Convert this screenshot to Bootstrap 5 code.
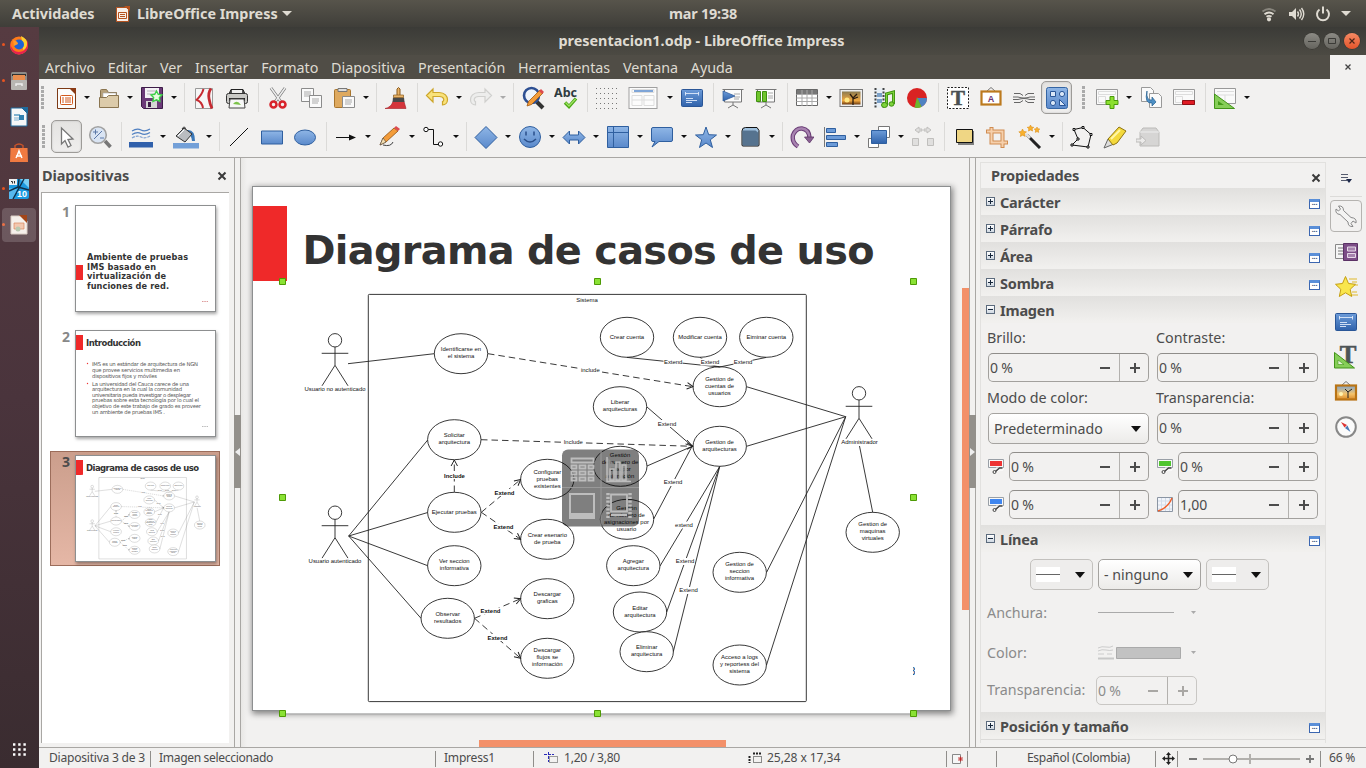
<!DOCTYPE html>
<html lang="es">
<head>
<meta charset="utf-8">
<title>presentacion1.odp - LibreOffice Impress</title>
<meta name="viewport" content="width=device-width, initial-scale=1">
<link href="https://cdn.jsdelivr.net/npm/bootstrap@5.3.0/dist/css/bootstrap.min.css" rel="stylesheet">
<style>
body{width:1366px;height:768px;overflow:hidden;background:#f2f1f0;color:#4c4c4c;font-family:"Noto Sans","Open Sans",sans-serif;font-size:14px;line-height:1.2}
svg{display:block;flex:none}
.topbar{height:27px;background:linear-gradient(#57544b,#3f3e39);color:#dfdbd2;font-weight:700;font-size:14.4px;flex:none}
.topbar .fit-a{letter-spacing:-.05px;width:83px}
.topbar .clock{left:669px;top:5px;letter-spacing:-.2px}
.dock{width:39px;background:linear-gradient(#563b41,#4a343c 50%,#3a2c30);flex:none}
.dock-item{height:36px;position:relative}
.dock-item.run::before{content:"";position:absolute;left:2px;top:16px;width:3px;height:3px;border-radius:2px;background:#e95420}
.dock-item.active::after{content:"";position:absolute;left:2px;top:1px;width:34px;height:34px;border-radius:4px;background:rgba(255,255,255,.17);z-index:0}
.dock-item svg{position:relative;z-index:1;margin-right:1px}
.titlebar{height:28px;background:linear-gradient(#3b3b37,#4c4a43);color:#dfdbd2;font-weight:700;font-size:14.4px;padding-right:6px}
.titlebar .caption{padding-left:60px}
.wbtn{width:16px;height:16px;border-radius:50%;background:linear-gradient(#8c8b85,#65645e);box-shadow:0 0 0 .5px #33322e}
.wbtn.closebtn{background:linear-gradient(#f58a64,#e4542a)}
.menubar{height:24px;background:#504d46;color:#dfdbd2;font-size:14.3px;padding-left:6px;gap:12.7px}
.menubar>span{padding-top:2px}
.menubar .docclose{width:36px;height:24px;background:#f2f1f0;padding-top:0}
.toolbars{height:79px;border-bottom:1px solid #a9a7a4}
.tbar{height:39px;padding-left:1px;padding-bottom:2px}
.tbar.draw{padding-left:2px}
.grip{width:9px;height:24px}
.grip::before{content:"";display:block;width:3px;height:24px;margin-left:1px;background:repeating-linear-gradient(#aaa 0 3px,transparent 3px 4px)}
.tb{width:33px;height:33px;display:flex;align-items:center;justify-content:center;flex:none}
.tb.wide{width:41px;padding-right:1px}
.tb.fill{width:35px}
.tb.on{position:relative}
.tb.on::before{content:"";position:absolute;inset:0 1px 0 1px;border:1px solid #9d9b98;border-radius:5px;background:linear-gradient(#e4e3e1,#efeeed);box-shadow:inset 0 0 2px #bbb}
.tb.on svg{position:relative}
.ar{width:11px;flex:none;display:flex;justify-content:center}
.ar.tight{width:10px}
.ar::before{content:"";border:3px solid transparent;border-top:3.5px solid #111;border-bottom:0}
.ar.off::before{border-top-color:#aaa}
.sp{width:8px;flex:none;height:29px}
.sp::before{content:"";display:block;width:1px;height:29px;margin-left:5px;background:#dbdad8}
.slidepane{width:195px;padding:2px 0 0 2px}
.panehead{font-weight:700;font-size:14.5px;letter-spacing:-.1px;height:32px;padding-right:7px;padding-left:1px}
.thumblist{width:188px;height:551px;background:#fff;border:1px solid #a9a7a4;border-width:1px 0 0 1px;padding:6px 0 0 8px}
.thumb{width:170px;height:115px;padding:5px 0 0 11px;margin-bottom:10px;font-weight:700;font-size:14px;color:#888;line-height:14px;border:1px solid transparent}
.thumb .num{width:13px}
.thumb.sel{background:linear-gradient(#cb9e8c,#e5b7a6);border-color:#9c6d5b;color:#4c4c4c;margin-top:12px;padding-top:3px}
.thumb svg{background:#fff;border:1px solid #8d8f90;box-shadow:1px 2px 3px rgba(0,0,0,.35)}
.splitter{width:7px;border:1px solid #a9a7a4;border-top:0;border-bottom:0;background:#f2f1f0;padding-top:257px}
.split-knob{width:7px;height:73px;background:#93908b;margin-left:-1px;display:flex;align-items:center;justify-content:center}
.canvasarea{width:728px;padding:28px 0 0 11px;background:linear-gradient(90deg,#e8e7e5,#f2f1f0 6px);flex:none}
.slide{width:699px;height:525px;background:#fff;border:1px solid #8d8f90;box-shadow:1px 2px 6px 1px rgba(0,0,0,.45)}
.vbar{width:7px;padding-top:102px}
.vthumb{height:322px;background:#f39069;width:7px}
.hthumb{height:7px;width:247px;background:#f39069;margin:29px 0 0 227px}
.deck{width:346px;margin:4px 0 0 4px;border:1px solid #e2e1df;border-bottom:0;height:581px;flex:none}
.deck .deckhead{height:25px;font-weight:700;font-size:14.6px;letter-spacing:-.15px;padding:0 4px 0 10px}
.deckhead svg{margin-top:5px}
.sect{height:27px;background:linear-gradient(#e1e0de,#f1f0ee 95%);font-weight:700;font-size:14.5px;letter-spacing:-.2px;padding:3px 5px 0 5px}
.sect .pm{width:9px;height:9px;border:1px solid #5b6a7c;background:linear-gradient(#fff,#cfd8e2);margin:-4px 5px 0 0;position:relative}
.pm::before{content:"";position:absolute;left:1px;right:1px;top:3px;height:1px;background:#16263a}
.pm.plus::after{content:"";position:absolute;top:1px;bottom:1px;left:3px;width:1px;background:#16263a}
.more{width:11px;height:10px;border:1px solid #3b66b0;border-top:3px solid #5a8fd8;background:#fff;margin-top:1px;font-size:7px;line-height:1px;color:#203a70;text-align:center}
.two{display:grid;grid-template-columns:161px 161px;grid-template-rows:30px 30px 30px 31px 38px 37px;column-gap:8px;padding-left:7px}
.two>.lbl{display:flex;align-items:center;margin-left:-1px}
.lbl{font-size:14.3px;padding-bottom:1px}
.chan{display:flex;align-items:center;padding-top:7px}
.spin{height:29px;border:1px solid #a2a09d;border-top-color:#8f8d8a;border-radius:5px;display:flex;align-items:stretch;background:#f2f1f0;line-height:27px;font-size:14px;letter-spacing:-.2px}
.spin .val{flex:1;padding-left:1px}
.spin i{width:29px;position:relative;flex:none}
.spin i+i{border-left:1px solid #b3b1ae;width:29px}
.spin i::before{content:"";position:absolute;left:10px;top:13px;width:10px;height:2px;background:#4c4c4c}
.spin i+i::after{content:"";position:absolute;left:14px;top:9px;width:2px;height:10px;background:#4c4c4c}
.spin.off{color:#8d8d8d;border-color:#c9c7c4}
.spin.off i::before,.spin.off i::after{background:#a9a7a4!important}
.combo{height:31px;border:1px solid #a5a3a0;border-radius:5px;background:linear-gradient(#fff,#ecebe9);display:flex;align-items:center;justify-content:space-between;padding:0 7px 0 5px;font-size:14.2px}
.combo .caret{border:5px solid transparent;border-width:6px 5px 0;border-top-color:#111}
.combo.flat{background:#eeedec;border-color:#c3c1be}
.swatch{width:24px;height:15px;background:linear-gradient(#fff 7px,#666 7px 8px,#fff 8px)}
.lin{margin-top:6px}
.linrow{gap:5px;padding:7px 0 0 49px}
.w63{width:63px;padding-left:5px}.w103{width:103px;padding-left:5px}
.prop{padding-left:6px;color:#8b8b8b}.prop .lbl{width:111px}
.anch{height:47px}.colr{height:32px}.trns{height:40px;padding-top:3px;margin-bottom:3px}
.prop.trns .lbl{width:109px}.trns .spin{width:101px}
.ch-r{color:#e33}.ch-g{color:#4fc52f}.ch-b{color:#3f86f0}
.deckend{border-top:1px solid #dcdbd9;height:2px}
.tabs{width:40px;padding-top:2px}
.tabs .tabi{height:35px;display:flex;align-items:center;justify-content:center;width:32px;margin-left:4px}
.tabs .tabi.first{height:37px;border-bottom:1px solid #dcdbd9}
.tabs .tabi.on{border:1px solid #b5b3b0;border-radius:4px;height:32px;margin-top:3px;margin-bottom:2px}
.status{height:21px;border-top:1px solid #a9a7a4;font-size:12.1px;letter-spacing:-.25px;flex:none;padding-top:1px}
.status>div{height:16px;display:flex;align-items:center;border-right:1px solid #908e8b;flex:none}
.status>div.nb{border-right:0}
.s1{width:112px;padding-left:10px}.s2{width:285px;padding-left:8px;letter-spacing:-.35px}.s3{width:98px;padding-left:8px}
.s4{width:204px;padding-left:10px;gap:5px}.s5{width:209px;padding-left:10px;gap:5px;letter-spacing:-.1px}.s6{width:21px}.s7{width:29px}.s8{width:159px;padding-left:30px;letter-spacing:-.35px}.s9{width:22px}.s10{width:143px;padding-left:10px}.s11{padding-left:8px}
.dg text{font-family:"Liberation Sans",Arial,sans-serif;font-size:5.95px;text-anchor:middle;fill:#111}
.dg .bld{font-weight:700}
</style>
</head>
<body class="d-flex flex-column">
<svg width="0" height="0" class="position-absolute">
<defs>
<linearGradient id="gb" x1="0" y1="0" x2="0" y2="1"><stop offset="0" stop-color="#8fb6e6"/><stop offset="1" stop-color="#5a89cb"/></linearGradient>
<linearGradient id="gd" x1="0" y1="0" x2="0" y2="1"><stop offset="0" stop-color="#6d9cd9"/><stop offset="1" stop-color="#2f62ab"/></linearGradient>
<linearGradient id="gsun" x1="0" y1="0" x2="0" y2="1"><stop offset="0" stop-color="#8b7a50"/><stop offset=".7" stop-color="#f0a840"/><stop offset="1" stop-color="#6b3a10"/></linearGradient>
<linearGradient id="gday" x1="0" y1="0" x2="0" y2="1"><stop offset="0" stop-color="#7fa5cf"/><stop offset=".6" stop-color="#f6c46a"/><stop offset="1" stop-color="#d98a2a"/></linearGradient>
<clipPath id="numclip"><rect x="913" y="664" width="2" height="14"/></clipPath>
<marker id="arr" viewBox="0 0 8 8" refX="7" refY="4" markerWidth="8" markerHeight="8" orient="auto" markerUnits="userSpaceOnUse"><path d="M1 .8 7 4 1 7.2" fill="none" stroke="#222"/></marker>
<symbol id="i-new" viewBox="0 0 24 24"><path d="M3.500 2.500H17.500L21.500 6.500V22.500H3.500Z" fill="#fcfcfb" stroke="#7d3a15"/><path d="M15 2H22V9Z" fill="#8a3a14"/><rect x="6.500" y="9.500" width="12" height="9" rx="1" fill="#fff" stroke="#d2591c"/><path d="M8 12h2m1 0h6M8 14h2m1 0h6M8 16h2m1 0h6" stroke="#d2591c"/></symbol>
<symbol id="i-open" viewBox="0 0 24 24"><path d="M3.500 20V4.500q0-1 1-1h5l2 3h8V20z" fill="#b7a17b" stroke="#8a7550"/><path d="M6 7h13v5H6z" fill="#fff" stroke="#aaa" stroke-width=".6"/><path d="M2.500 21.500V11.500h7l2-2h10v12z" fill="#dccbaa" stroke="#8a7550"/></symbol>
<symbol id="i-save" viewBox="0 0 24 24"><path d="M1.500 1.500h21v21h-19l-2-2z" fill="#6b3a78" stroke="#3d1c48"/><path d="M5 2h14v10H5z" fill="#f4f2f5"/><path d="M7 5h10M7 8h9" stroke="#b9b4bc"/><path d="M6 15h11v7H6z" fill="#d5d5d5"/><path d="M8 16h3v5H8z" fill="#3d1c48"/><path d="m16.500 5 1.800 3.300 3.700.6-2.600 2.700.5 3.800-3.400-1.600-3.500 1.600.6-3.800L11 8.900l3.700-.6z" fill="#e9fbe1" stroke="#3fd04a" stroke-width="1.400"/></symbol>
<symbol id="i-pdf" viewBox="0 0 24 24"><path d="M3.500 2.500h17v20h-17z" fill="#f6f6f6" stroke="#999"/><path d="M4 14.500Q10 9 11.500 3M5 14q5 2 6 8" fill="none" stroke="#c62a31" stroke-width="2"/><path d="M19 2.500q-3 4-2 10t3 10" fill="none" stroke="#c62a31" stroke-width="2.800"/></symbol>
<symbol id="i-print" viewBox="0 0 24 24"><path d="M4 8 6 3.500h12L20 8z" fill="#555" stroke="#222"/><path d="M7 4h10v4H7z" fill="#eee"/><rect x="1.500" y="7.500" width="21" height="10" rx="2" fill="#c9c9c6" stroke="#333"/><path d="M4 12h16v3H4z" fill="#222"/><path d="M5 13h14l1 9H4z" fill="#f7f7f7" stroke="#444"/><path d="M8 18q4-5 8 1z" fill="#7cc34a"/></symbol>
<symbol id="i-cut" viewBox="0 0 24 24"><path d="M5 2 15 16M19 2 9 16" stroke="#777" stroke-width="3"/><path d="M5 2 15 16M19 2 9 16" stroke="#eee" stroke-width="1.500"/><circle cx="7.500" cy="18.500" r="3" fill="none" stroke="#d8232b" stroke-width="2.500"/><circle cx="16.500" cy="18.500" r="3" fill="none" stroke="#d8232b" stroke-width="2.500"/></symbol>
<symbol id="i-copy" viewBox="0 0 24 24"><path d="M2.500 2.500h12v13h-12z" fill="#fafafa" stroke="#8b8b8b"/><path d="M5 6h7M5 8h7M5 10h6" stroke="#aaa"/><path d="M10.500 9.500h12v12h-12z" fill="#fafafa" stroke="#8b8b8b"/><path d="M13 13h7M13 15h7M13 17h6" stroke="#aaa"/></symbol>
<symbol id="i-paste" viewBox="0 0 24 24"><rect x="2.500" y="3.500" width="16" height="18" rx="1" fill="#dea95f" stroke="#a8752d"/><path d="M6 2.500h9v3H6z" fill="#ddd" stroke="#777"/><path d="M10.500 10.500h12v11h-12z" fill="#fafafa" stroke="#8b8b8b"/><path d="M13 14h7M13 16h7M13 18h6" stroke="#aaa"/></symbol>
<symbol id="i-brush" viewBox="0 0 24 24"><path d="M1 22.500q6-1 8-7h11l2 7z" fill="#d4353b" stroke="#a31d24" stroke-width=".6"/><path d="M9 11.500h11l.5 4.500H8.500z" fill="#484848"/><path d="M13 10V3q1.500-3 3 0v7z" fill="#e9b469" stroke="#8c5b1d"/><path d="M9.500 9h10v2.500h-10z" fill="#e9b469" stroke="#8c5b1d" stroke-width=".7"/></symbol>
<symbol id="i-undo" viewBox="0 0 24 24"><path d="M1.500 9.500 8 3v3.500h6c6 0 8.500 4 8.500 7s-2 5.500-5 5.500v-3.500c2-.5 2-5-3-5H8V16z" fill="#f9e27a" stroke="#cda62a" stroke-width="1.200"/></symbol>
<symbol id="i-redo" viewBox="0 0 24 24"><path d="M22.500 9.500 16 3v3.500h-6c-6 0-8.500 4-8.500 7S3.500 19 6.500 19v-3.500c-2-.5-2-5 3-5H16V16z" fill="#ededec" stroke="#d0d0ce" stroke-width="1.200"/></symbol>
<symbol id="i-find" viewBox="0 0 24 24"><path d="m15 15 7 7" stroke="#333" stroke-width="4"/><circle cx="10.500" cy="9.500" r="7.500" fill="#eef3fa" stroke="#2d4f92" stroke-width="2.600"/><path d="m6 20 1.500-4.500L19 4l3 3L10.500 18.500z" fill="#f39c3a" stroke="#a25b12" stroke-width=".8"/><path d="m18 5 2-2 3 3-2 2z" fill="#dd4a4f"/></symbol>
<symbol id="i-abc" viewBox="0 0 24 24"><text x="0" y="11" font-family="Noto Sans" font-weight="700" font-size="12" textLength="23" lengthAdjust="spacingAndGlyphs" fill="#2f3b40">Abc</text><path d="m11 16.500 4 4 7-8" fill="none" stroke="#4aa814" stroke-width="3.400"/><path d="m11.500 16.500 3.500 3.500 6.500-7" fill="none" stroke="#a0e264" stroke-width="1.300"/></symbol>
<symbol id="i-grid" viewBox="0 0 24 24"><path d="M1 2.500h23M1 7.500h23M1 12.500h23M1 17.500h23M1 22.500h23" stroke="#777" stroke-dasharray="1 3"/></symbol>
<symbol id="i-lay" viewBox="0 0 30 24"><rect x="1" y="1.500" width="28" height="21" fill="#fcfcfc" stroke="#a0a0a0"/><path d="M4 3.500h22v3H4zM4 9.500h10v10H4zM16 9.500h10v10H16zM4 14h22" fill="none" stroke="#ddd"/><path d="M6 5h19" stroke="#5f8fcd" stroke-width="1.600"/></symbol>
<symbol id="i-master" viewBox="0 0 24 24"><rect x="1.500" y="3.500" width="21" height="17" rx="1" fill="url(#gd)" stroke="#2a5697"/><path d="M5 7.500h14M5.500 6v3.500M18.500 6v3.500M6 12.500h7M6 14.500h11M6 16.500h6" stroke="#dfeafa" stroke-width=".9"/></symbol>
<symbol id="i-show" viewBox="0 0 24 24"><path d="M1.500 3.500h21M3.500 4v12h17V4M12 16v3m0 0-5 3m5-3 5 3" fill="#fcfcfc" stroke="#777"/><path d="M13 8h6M13 11h6M13 13h5" stroke="#aaa"/><path d="m2 5 12 5L2 15z" fill="url(#gd)" stroke="#2a5697" stroke-width=".7"/></symbol>
<symbol id="i-show2" viewBox="0 0 24 24"><path d="M1.500 3.500h21M3.500 4v12h17V4M12 16v3m0 0-5 3m5-3 5 3" fill="#fcfcfc" stroke="#777"/><path d="M14 7h5M14 10h5M14 12h5" stroke="#aaa"/><path d="M2.500 5.500h4v10h-4zM8.500 5.500h4v10h-4z" fill="#6fc52c" stroke="#3f8f10"/></symbol>
<symbol id="i-table" viewBox="0 0 24 24"><path d="M1.500 3.500h21v16h-21z" fill="#fff" stroke="#666"/><path d="M2 4h20v4H2z" fill="#777"/><path d="M1.500 8.500h21M1.500 12h21M1.500 15.500h21M7 4v16M12 4v16M17 4v16" stroke="#aaa"/></symbol>
<symbol id="i-pic" viewBox="0 0 24 24"><rect x="1" y="3.500" width="22.500" height="17" fill="#eee" stroke="#777"/><rect x="3" y="5.500" width="18.500" height="13" fill="url(#gsun)"/><circle cx="8" cy="14" r="2.500" fill="#ffe680"/><path d="M14 19v-7l-3-4m3 4 4-4m-4 5 5-2" stroke="#2b1c10" fill="none" stroke-width="1.300"/></symbol>
<symbol id="i-film" viewBox="0 0 24 24"><path d="M2 2.500h11v19H2z" fill="#e7eef5"/><path d="M3.500 2v20M11.500 2v20" stroke="#444" stroke-width="2" stroke-dasharray="2 1.500"/><path d="M5 7h5v4H5zm0 6h5v4H5z" fill="#7aa0c8"/><path d="M14.500 19V8l7-2v12" fill="none" stroke="#3d9110" stroke-width="3"/><path d="M14.500 19V8l7-2v12" fill="none" stroke="#7ed33c" stroke-width="1.200"/><ellipse cx="12.500" cy="19" rx="3" ry="2.500" fill="#7ed33c" stroke="#3d9110"/><ellipse cx="19.500" cy="18" rx="2.500" ry="2.200" fill="#7ed33c" stroke="#3d9110"/></symbol>
<symbol id="i-pie" viewBox="0 0 24 24"><circle cx="12" cy="12" r="10" fill="#d92323"/><path d="M12 12h10a10 10 0 0 1-5.500 9z" fill="#4f82c2"/><path d="m12 11 4.500 10a10 10 0 0 1-7 .5z" fill="#6ab82e"/></symbol>
<symbol id="i-text" viewBox="0 0 24 24"><rect x="1.500" y="1.500" width="21" height="21" fill="#fff" stroke="#222" stroke-dasharray="2 1.500"/><text x="12" y="19" text-anchor="middle" font-family="Liberation Serif" font-weight="700" font-size="21" fill="#4a5052" stroke="#4a5052" stroke-width=".5">T</text></symbol>
<symbol id="i-frame" viewBox="0 0 24 24"><path d="m8 5 4-3.500L16 5" fill="none" stroke="#777"/><rect x="2.500" y="5.500" width="19" height="13" fill="#fff" stroke="#bc7a1e" stroke-width="2.200"/><text x="12" y="15.500" text-anchor="middle" font-family="Liberation Sans" font-weight="700" font-size="9" fill="#6a3576">A</text></symbol>
<symbol id="i-link" viewBox="0 0 24 24"><path d="M2 7.500h6l3 2m11-2h-6l-3 2M2 16.500h6l3-2m11 2h-6l-3-2M1 11h5q3 1 6 1t6-1h5M1 13.500h5q3-1 6-1t6 1h5" fill="none" stroke="#666"/></symbol>
<symbol id="i-shapes" viewBox="0 0 24 24"><rect x="1.500" y="1.500" width="21" height="21" rx="2" fill="url(#gb)" stroke="#3465a4"/><g fill="#dbe8f8" stroke="#2a5697"><path d="M5.500 5.500h5v5h-5z"/><circle cx="17" cy="8" r="2.600"/><circle cx="8" cy="17" r="2.600"/><path d="M14.500 13.500v6h6z"/></g></symbol>
<symbol id="i-add" viewBox="0 0 24 24"><path d="M1.500 3.500h21v15h-21z" fill="#fafafa" stroke="#999"/><path d="M3.500 5.500h17v3h-17zM3.500 10.500h7v6h-7z" fill="none" stroke="#ddd"/><path d="M15 10.500h4v4h4v4h-4v4h-4v-4h-4v-4h4z" fill="#8be02e" stroke="#4a9a0c"/></symbol>
<symbol id="i-dup" viewBox="0 0 24 24"><path d="M2.500 1.500h9l3 3v11h-12z" fill="#fafafa" stroke="#999"/><path d="M10.500 7.500h9l3 3v11h-12z" fill="#fafafa" stroke="#999"/><path d="M8 5q-1 10 5 9v-3l4 5-4 4v-3Q5 18 8 5z" fill="#4d8fc4" stroke="#25608f" stroke-width=".7"/></symbol>
<symbol id="i-del" viewBox="0 0 24 24"><path d="M1.500 3.500h21v15h-21z" fill="#fafafa" stroke="#999"/><path d="M3.500 5.500h17v3h-17zM3.500 10.500h7v6h-7z" fill="none" stroke="#ddd"/><path d="M10.500 14.500h12v4h-12z" fill="#e01b24" stroke="#8f0f14"/></symbol>
<symbol id="i-design" viewBox="0 0 24 24"><path d="M1.500 2.500h21v15h-21z" fill="#fafafa" stroke="#999"/><path d="M4 5.500h17M4 9h17M12 9v8" stroke="#ddd"/><path d="M1.500 8v14.500h20z" fill="#86ce58" stroke="#419318"/><path d="M5 15v4h6z" fill="#449a18"/></symbol>
<symbol id="i-cursor" viewBox="0 0 24 24"><path d="M6.500 3v16l3.500-3.500 3 6.500 3-1.500-3-6 5-.5z" fill="#fff" stroke="#777" stroke-width="1.300"/></symbol>
<symbol id="i-zoom" viewBox="0 0 24 24"><path d="m17 16 5.500 6" stroke="#777" stroke-width="3.600"/><circle cx="10" cy="10" r="8.300" fill="#d9e4f3" stroke="#a2a2a2" stroke-width="1.600"/><path d="m6 14 8-8M5 7h5M7.500 4.500v5M12 13h4" stroke="#5b78a8"/></symbol>
<symbol id="i-lcol" viewBox="0 0 24 24"><path d="M3 6q5-3 9-1t9-1M3 9.500q5-3 9-1t9-1" fill="none" stroke="#4f7fc0" stroke-width="1.200"/><path d="M3 13q5-3 9-1t9-1" fill="none" stroke="#7fa0cf" stroke-width="1.200" stroke-dasharray="3 1"/><path d="M0 17h24v5.500H0z" fill="#3060ab"/></symbol>
<symbol id="i-fcol" viewBox="0 0 26 24"><path d="M9 4q3-5 4 2" fill="none" stroke="#333"/><path d="M14 5q8-1 8 11h-3q0-6-7-9z" fill="#3b78b8"/><path d="m3 11 8-8 8 6-7 8z" fill="#b9bcc0" stroke="#333"/><path d="m5 11 6-6" stroke="#fff"/><path d="M0 18h26v5.500H0z" fill="#73a0d8"/></symbol>
<symbol id="i-line" viewBox="0 0 24 24"><path d="M3 21 21 3" stroke="#111"/></symbol>
<symbol id="i-rect" viewBox="0 0 24 24"><path d="M1.500 6h21v13h-21z" fill="url(#gb)" stroke="#2f5f9f"/></symbol>
<symbol id="i-ell" viewBox="0 0 24 24"><ellipse cx="12" cy="12.500" rx="10.500" ry="7.500" fill="url(#gb)" stroke="#2f5f9f"/></symbol>
<symbol id="i-arrow" viewBox="0 0 24 24"><path d="M2 12.500h14" stroke="#111"/><path d="m15 9.500 7 3-7 3z" fill="#111"/></symbol>
<symbol id="i-pencil" viewBox="0 0 24 24"><path d="m2 20 3-7L16 3l4 3L8 17z" fill="#f39c3a" stroke="#8f5010" stroke-width=".8"/><path d="m16 3 2-2 4 3-2 2z" fill="#dd4a4f"/><path d="m2 20 3-7 3 4z" fill="#f5dfb0" stroke="#444" stroke-width=".6"/><path d="M5 20q8 2 10-3" stroke="#444" fill="none"/></symbol>
<symbol id="i-conn" viewBox="0 0 24 24"><path d="M5 4.500h6.500v15H17" fill="none" stroke="#111"/><circle cx="4" cy="4.500" r="2.200" fill="#fff" stroke="#111"/><circle cx="18.500" cy="19" r="2.200" fill="#fff" stroke="#111"/></symbol>
<symbol id="i-dia" viewBox="0 0 24 24"><path d="M12 1.500 23 12.500 12 23.500 1 12.500z" fill="url(#gb)" stroke="#2f5f9f"/></symbol>
<symbol id="i-smile" viewBox="0 0 24 24"><circle cx="12" cy="12" r="10.500" fill="url(#gb)" stroke="#2f5f9f"/><path d="M8 6.500v4M16 6.500v4M6 14q6 6 12 0" fill="none" stroke="#2a4f8a" stroke-width="1.500"/></symbol>
<symbol id="i-dbl" viewBox="0 0 24 24"><path d="m1 12.500 6.500-6.500v4h9v-4l6.500 6.500-6.500 6.500v-4h-9v4z" fill="url(#gb)" stroke="#2f5f9f"/></symbol>
<symbol id="i-flow" viewBox="0 0 24 24"><path d="M1.500 1.500h21v21h-21z" fill="url(#gb)" stroke="#2f5f9f"/><path d="M1.500 7.500h21M7.500 1.500v21" stroke="#2f5f9f"/></symbol>
<symbol id="i-call" viewBox="0 0 24 24"><path d="M3 2.500h18q1.500 0 1.500 1.500v11q0 1.500-1.500 1.500H9l-7 5.500 3-5.500H3q-1.500 0-1.500-1.500V4q0-1.500 1.500-1.500z" fill="url(#gb)" stroke="#2f5f9f"/></symbol>
<symbol id="i-star" viewBox="0 0 24 24"><path d="m12 2 2.700 7.700 7.800.3-6.200 4.800 2.200 7.700-6.500-4.500L5.500 22.500l2.200-7.700L1.500 10l7.800-.3z" fill="url(#gb)" stroke="#2f5f9f"/></symbol>
<symbol id="i-3d" viewBox="0 0 24 24"><path d="M4 6q0-3.500 3.500-3.500H19l2 3V20q0 1-1 1H5q-1 0-1-1z" fill="#9fc0dd" stroke="#111"/><path d="M4.500 5.500h13l2.500 2V20.500h-15z" fill="#56738f"/></symbol>
<symbol id="i-rot" viewBox="0 0 24 24"><path d="M8 21.500Q1.500 17 3 10q3-7 9-6.500 7 1 7.500 9" fill="none" stroke="#6a3d76" stroke-width="4.400"/><path d="M8 21.500Q1.500 17 3 10q3-7 9-6.500 7 1 7.500 9" fill="none" stroke="#a883b0" stroke-width="2.400"/><path d="M14.500 12H24l-4.500 6z" fill="#8a6092" stroke="#5d3468" stroke-width=".8"/></symbol>
<symbol id="i-align" viewBox="0 0 24 24"><path d="M1.500 2v20" stroke="#777"/><g fill="#6c9bd8" stroke="#2f5f9f"><path d="M3.500 3.500h9v4h-9zM3.500 10.500h19v4h-19zM3.500 17.500h11v4h-11z"/></g></symbol>
<symbol id="i-arrange" viewBox="0 0 24 24"><path d="M11.500 1.500h11v11h-11zM1.500 13.500h10v9h-10z" fill="#fff" stroke="#777"/><path d="M4.500 5.500h15v13h-15z" fill="url(#gd)" stroke="#2f5f9f"/></symbol>
<symbol id="i-dist" viewBox="0 0 24 24"><path d="m4 5 4-3v2h3v2H8v2zM20 5l-4-3v2h-3v2h3v2zM1.500 13.500h6v7h-6zM16.500 13.500h6v7h-6z" fill="#e0dfde" stroke="#c0bfbd"/></symbol>
<symbol id="i-shadow" viewBox="0 0 24 24"><path d="M6 6h16v14H6z" fill="#222" opacity=".55"/><path d="M4.500 4.500h16v13h-16z" fill="#efd684" stroke="#111"/></symbol>
<symbol id="i-crop" viewBox="0 0 24 24"><path d="M6.500 2v15.500H23M1 6.500h16.500V23" fill="none" stroke="#d08c50" stroke-width="4"/><path d="M6.500 3v14.500H22M2 6.500h15.500V22" fill="none" stroke="#f6d0ac" stroke-width="2"/></symbol>
<symbol id="i-wand" viewBox="0 0 24 24"><path d="m9 10 13 13" stroke="#222" stroke-width="3"/><path d="m8 9 4 4" stroke="#ddd" stroke-width="3"/><path d="m4.500 4 1.300 2.500 2.700.3-2 2 .7 2.700L4.700 10.200 2.300 11.500l.5-2.700L.800 6.800l2.500-.3zM12.500 0l1 2 2.300.3-1.700 1.500.5 2.300-2.100-1.100-2 1.100.3-2.300L9.200 2.300l2.300-.3zM19 2l.8 1.700 2 .3-1.400 1.400.3 2-1.700-.8-1.700.8.3-2L16.200 4l2-.3z" fill="#f8b12e" stroke="#d98409" stroke-width=".5"/></symbol>
<symbol id="i-points" viewBox="0 0 24 24"><path d="M4 4.500 13 2.500l8 7-3 12.500-16-2 6-6z" fill="none" stroke="#111"/><g fill="#fff" stroke="#111"><path d="M3 3.500h2v2H3zM12 1.500h2v2h-2zM20 8.500h2v2h-2zM17 21h2v2h-2zM1 19h2v2H1zM7 13h2v2H7z"/></g></symbol>
<symbol id="i-glue" viewBox="0 0 24 24"><path d="m1 23 4-9 6 5z" fill="#ddd" stroke="#666"/><path d="M5 14 16 2l7 4-9 12-4 2z" fill="#f4d93c" stroke="#907512"/><path d="m8 14 9-9" stroke="#fff7a8" stroke-width="2"/></symbol>
<symbol id="i-ext" viewBox="0 0 24 24"><path d="m4 7 3-4h13l3 4v14H4z" fill="#d6d5d4" stroke="#bcbbb9"/><path d="M4 7h19" stroke="#eee"/><path d="M0 14h5v-3l5 4.500L5 20v-3H0z" fill="#eceBea" stroke="#bcbbb9"/></symbol>
<symbol id="i-wrench" viewBox="0 0 24 24"><path d="M2 5q-1 5 4 5.500L14 18q0 5 5 4.500l-2-3 2-2.500 3 2q1-5-5-5.500L9.500 6.500q0-5-5-4.500l2 3-2 2z" fill="#f4f4f3" stroke="#888"/></symbol>
<symbol id="i-trans" viewBox="0 0 24 24"><path d="M1.500 4.500h9v14h-9z" fill="#f5f5f5" stroke="#888"/><path d="M4 8h5M4 11h5M4 14h5" stroke="#777"/><path d="M9.500 3.500h14v17h-14z" fill="#7c4d86" stroke="#5b3165"/><path d="M13.500 7h8v4h-8zM13.500 13.500h8v4h-8z" fill="#a683ad" stroke="#e6d9e8"/></symbol>
<symbol id="i-gold" viewBox="0 0 24 24"><path d="M15 4h8M18 7h5M18 17h5M16 20h8M20 10h4" stroke="#e0b92b" stroke-width="1.200"/><path d="m11.500 1.500 3 7 7 .8-5.300 5 1.500 7.200-6.200-3.700-6.200 3.700 1.500-7.200-5.300-5 7-.8z" fill="#f9e64d" stroke="#c59f13"/></symbol>
<symbol id="i-styles" viewBox="0 0 24 24"><text x="14" y="18" text-anchor="middle" font-family="Liberation Serif" font-weight="700" font-size="25" fill="#4e5456" stroke="#4e5456" stroke-width=".6">T</text><path d="M.500 7.500v15.500h20z" fill="#86ce58" stroke="#419318"/><path d="M4 15v4.500h6z" fill="#e3f6d6" stroke="#419318" stroke-width=".6"/></symbol>
<symbol id="i-gallery" viewBox="0 0 24 24"><path d="m8 5 4-3.500L16 5" fill="none" stroke="#777"/><rect x="2" y="5.500" width="20" height="14" fill="url(#gday)" stroke="#b97415" stroke-width="2.200"/><circle cx="7" cy="14" r="2" fill="#fff2b0"/><path d="M14 18v-6l-3-3m3 3 4-3" stroke="#222" fill="none"/></symbol>
<symbol id="i-nav" viewBox="0 0 24 24"><circle cx="12" cy="12" r="9.800" fill="#fbfbfb" stroke="#888" stroke-width="2"/><path d="m7 7 6 3-2.500 2.500z" fill="#dd3333"/><path d="m16.500 17-3-6.500-2.500 2.500z" fill="#4a78b5"/></symbol>
<symbol id="i-monitor" viewBox="0 0 17 17"><path d="M.500 1.500h15v8H.500z" fill="#f8f8f8" stroke="#999fa6"/><path d="M2 3h12v5H2z" fill="currentColor"/><path d="M8 10h7v2h-4l-4 3" fill="none" stroke="#fff"/><path d="m7.500 13.500 4-3.500h3" fill="none" stroke="#444" stroke-width="1.500"/><circle cx="6.500" cy="14" r="1.500" fill="none" stroke="#444"/></symbol>
<g id="actor" fill="none" stroke="#222" stroke-width=".9"><circle cx="0" cy="0" r="6.700" fill="#fff"/><path d="M0 6.700V25M-13.300 13H13.300M-13 45.500 0 25 13 45.500"/></g>
<ellipse id="e" rx="26.700" ry="20"/>
<g id="diagram" class="dg">
<path d="M282 281h631v432.500H282z" fill="#fff"/>
<rect x="368.300" y="294.400" width="438" height="407.200" rx="1" fill="none" stroke="#222" stroke-width=".9"/>
<g fill="#fff" stroke="#222" stroke-width=".9">
<use href="#e" x="461" y="353.700"/><use href="#e" x="454.300" y="439.700"/><use href="#e" x="454.300" y="512.300"/><use href="#e" x="454.300" y="565.700"/><use href="#e" x="447.700" y="618.300"/><use href="#e" x="547.300" y="479.300"/><use href="#e" x="547.300" y="539.300"/><use href="#e" x="547.300" y="598.700"/><use href="#e" x="547.300" y="658.300"/><use href="#e" x="627" y="337.300"/><use href="#e" x="700" y="337.300"/><use href="#e" x="766.300" y="337.300"/><use href="#e" x="719.700" y="386.700"/><use href="#e" x="620" y="406.700"/><use href="#e" x="719.700" y="446.300"/><use href="#e" x="620.300" y="466.300"/><use href="#e" x="627" y="519.300"/><use href="#e" x="633.300" y="565.700"/><use href="#e" x="640" y="612"/><use href="#e" x="646.700" y="651.700"/><use href="#e" x="739.700" y="572.300"/><use href="#e" x="739.700" y="665"/><use href="#e" x="872.700" y="532.300"/>
</g>
<use href="#actor" x="335" y="340.300"/><use href="#actor" x="335" y="512.700"/><use href="#actor" x="859" y="393.300"/>
<g fill="none" stroke="#222" stroke-width=".9">
<path d="M348 363.700 434.300 353.700M427.700 440 348.700 536 427.700 512.500M427.700 565.700 348.700 536 421 618.300M627 357.400 719.700 367 766.300 357.400M700 357.400l10 7 9.700 2.600M746.500 386.700 845.700 416.700 746.500 446.300M766.500 572.500 845.700 416.700 766.500 665M859.500 446 872.700 512.300M647 407 692 446M647 466 692 446.400 653.700 519M660 566 719.700 466.500 666.700 612M719.700 466.500 673.300 651.700M687 440l5.500 6-7-2"/>
<g stroke-dasharray="6.500 4"><path marker-end="url(#arr)" d="M488 353.700 693 386.700"/><path marker-end="url(#arr)" d="M481 439.700 693 446.300"/><path marker-end="url(#arr)" d="M454.300 492V460"/><path marker-end="url(#arr)" d="M481.300 512.300 520.600 479.500"/><path marker-end="url(#arr)" d="M481.300 512.300 520.600 539.300"/><path marker-end="url(#arr)" d="M474.500 618.300 520.600 598.700"/><path marker-end="url(#arr)" d="M474.500 618.300 520.600 658.300"/></g>
</g>
<path fill="#fff" d="M580 366h20v7h-20zM563 438.500h20v7h-20zM444 472h21v7h-21zM494 489h20v7h-20zM493 523.500h20v7h-20zM480 607.500h20v7h-20zM487 634h21v7h-21zM663.500 358.500h19v7h-19zM700.500 358.500h19v7h-19zM733.500 358.500h19v7h-19zM657.500 420h19v7h-19zM663.500 479h19v7h-19zM675 521.500h18v7h-18zM675.500 558h19v7h-19zM679 587h19v7h-19zM305 386.500h61v5.500H305zM309 558.500h53v5.500h-53zM841 439h36v6h-36z"/>
<text x="587" y="302">Sistema</text><text x="335" y="391">Usuario no autenticado</text><text x="335" y="563">Usuario autenticado</text><text x="859.500" y="444">Administrador</text>
<text x="461" y="351">Identificarse en<tspan x="461" dy="7">el sistema</tspan></text>
<text x="454.300" y="437">Solicitar<tspan x="454.300" dy="7">arquitectura</tspan></text>
<text x="454.300" y="514">Ejecutar pruebas</text>
<text x="454.300" y="563">Ver seccion<tspan x="454.300" dy="7">informativa</tspan></text>
<text x="447.700" y="616">Observar<tspan x="447.700" dy="7">resultados</tspan></text>
<text x="547.300" y="473.500">Configurar<tspan x="547.300" dy="7">pruebas</tspan><tspan x="547.300" dy="7">existentes</tspan></text>
<text x="547.300" y="536.500">Crear esenario<tspan x="547.300" dy="7">de prueba</tspan></text>
<text x="547.300" y="596">Descargar<tspan x="547.300" dy="7">graficas</tspan></text>
<text x="547.300" y="652">Descargar<tspan x="547.300" dy="7">flujos se</tspan><tspan x="547.300" dy="7">información</tspan></text>
<text x="627" y="338.500">Crear cuenta</text><text x="700" y="338.500">Modificar cuenta</text><text x="766.300" y="338.500">Eiminar cuenta</text>
<text x="719.500" y="380.500">Gestion de<tspan x="719.500" dy="7">cuentas de</tspan><tspan x="719.500" dy="7">usuarios</tspan></text>
<text x="620" y="404">Liberar<tspan x="620" dy="7">arquitecturas</tspan></text>
<text x="719.500" y="444">Gestion de<tspan x="719.500" dy="7">arquitecturas</tspan></text>
<text x="620" y="456.500">Gestión<tspan x="620" dy="7">de numero de</tspan><tspan x="620" dy="7">días por</tspan><tspan x="620" dy="7">asignación</tspan></text>
<text x="626.500" y="509.500">Gestión<tspan x="626.500" dy="7">de número de</tspan><tspan x="626.500" dy="7">asignaciones por</tspan><tspan x="626.500" dy="7">usuario</tspan></text>
<text x="633.300" y="563">Agregar<tspan x="633.300" dy="7">arquitectura</tspan></text>
<text x="640" y="609.500">Editar<tspan x="640" dy="7">arquitectura</tspan></text>
<text x="646.700" y="649">Eliminar<tspan x="646.700" dy="7">arquitectura</tspan></text>
<text x="739.500" y="566">Gestion de<tspan x="739.500" dy="7">seccion</tspan><tspan x="739.500" dy="7">informativa</tspan></text>
<text x="739.500" y="658.500">Acceso a logs<tspan x="739.500" dy="7">y reportess del</tspan><tspan x="739.500" dy="7">sistema</tspan></text>
<text x="872.700" y="526.300">Gestion de<tspan x="872.700" dy="7">maquinas</tspan><tspan x="872.700" dy="7">virtuales</tspan></text>
<text x="590.300" y="371.500">include</text><text x="573.300" y="444">Include</text>
<text x="673.200" y="363.500">Extend</text><text x="710" y="363.500">Extend</text><text x="743" y="363.500">Extend</text><text x="667" y="425.500">Extend</text><text x="673" y="484">Extend</text><text x="684" y="527">extend</text><text x="685" y="563">Extend</text><text x="688.500" y="592.300">Extend</text>
<g class="bld"><text x="454.500" y="477.500">Include</text><text x="504.500" y="494.500">Extend</text><text x="503.500" y="529">Extend</text><text x="490.500" y="613">Extend</text><text x="497.500" y="639.500">Extend</text></g>
</g>
</defs>
</svg>

<header class="topbar d-flex align-items-center position-relative px-2">
  <span class="fit-a ms-1">Actividades</span>
  <svg class="ms-3 me-1 overflow-visible" width="18" height="18" viewBox="0 0 18 18"><path d="M5.500 2.500h10l2 2v12h-12z" fill="#f7efe9" stroke="#b4521f"/><path d="M13 1h6v5z" fill="#b4521f"/><path d="M7.500 7.500h8v6h-8zM9 9.500h5M9 11.500h5" fill="none" stroke="#b4521f"/></svg>
  <span class="ms-1">LibreOffice Impress</span>
  <svg class="ms-1" width="10" height="6"><path d="M0 0h10L5 5z" fill="#dfdbd2"/></svg>
  <span class="clock position-absolute">mar 19:38</span>
  <div class="ms-auto d-flex align-items-center">
    <svg width="16" height="16" viewBox="0 0 16 16" fill="none" stroke="#dfdbd2" stroke-width="1.800"><path d="M1.500 5.500q6.500-5 13 0" opacity=".4"/><path d="M3.500 8.200q4.500-3.500 9 0M5.500 10.800q2.500-1.800 5 0"/><circle cx="8" cy="13.300" r="1.200" fill="#dfdbd2"/></svg>
    <svg class="ms-2 me-1" width="24" height="16" viewBox="0 0 24 16"><path d="M4 6h3l4-4v12l-4-4H4z" fill="#dfdbd2"/><path d="M12.500 5.500q2 2.500 0 5M14.500 3.500q3.500 4.500 0 9M16.500 2q4.500 6 0 12" fill="none" stroke="#dfdbd2" stroke-width="1.400"/></svg>
    <svg width="18" height="16" viewBox="-3 0 18 16" fill="none" stroke="#dfdbd2" stroke-width="2"><path d="M4.500 3.500a6 6 0 1 0 7 0M8 .500v7" transform="translate(-1)"/></svg>
    <svg class="ms-2 me-1" width="15" height="6"><path d="M2 0h10L7 5z" fill="#dfdbd2"/></svg>
  </div>
</header>

<div class="d-flex flex-grow-1">
<aside class="dock d-flex flex-column">
  <div class="dock-item run d-flex align-items-center justify-content-center"><svg width="20" height="20" viewBox="0 0 20 20"><circle cx="10" cy="10.500" r="9" fill="#ff7a1a"/><path d="M1 8q2 9 9 9 8-1 8-8l1-4 0 6q-1 8-9 8.500Q1 19 1 8z" fill="#e8224f"/><path d="M12 1q7 3 6 9-1 4-4 5l-1-9z" fill="#ffcf2e"/><circle cx="10" cy="9.500" r="5" fill="#1d63d4"/><path d="M4 5q5 1 5 4l-4 2z" fill="#ff9a2a"/></svg></div>
  <div class="dock-item run d-flex align-items-center justify-content-center"><svg width="18" height="20" viewBox="0 0 18 20"><rect x="1" y="1" width="16" height="17" rx="1.500" fill="#8d8b88"/><path d="M2 3h14v2H2z" fill="#333"/><path d="M3 4h12v5H3z" fill="#e98d4e"/><rect x="1" y="9" width="16" height="10" rx="1" fill="#b8b6b2"/><path d="M6 15v-2h6v2" fill="none" stroke="#eee" stroke-width="1.500"/></svg></div>
  <div class="dock-item d-flex align-items-center justify-content-center"><svg width="18" height="20" viewBox="0 0 18 20"><path d="M1 1h11l5 5v13H1z" fill="#f5f7f8" stroke="#1e6a9c"/><path d="M11 0h7v7z" fill="#1e6a9c"/><path d="M4 7h6v2H4zM4 10.500h10v1H4zm0 2h5v1H4z" fill="#7fb2d0"/><path d="M9 8h5v5H9z" fill="#2f80b0"/></svg></div>
  <div class="dock-item d-flex align-items-center justify-content-center"><svg width="20" height="20" viewBox="0 0 20 20"><path d="M6 6V2.500q4-3 8 0V6" fill="none" stroke="#c9532a" stroke-width="1.400"/><path d="M1.500 5h17l.5 14H1z" fill="#f07a41"/><path d="M7 15q2-4 3-7 1 3 3 7M7 13h6" fill="none" stroke="#fff" stroke-width="1.500"/></svg></div>
  <div class="dock-item run d-flex align-items-center justify-content-center"><svg width="20" height="20" viewBox="0 0 20 20"><rect width="20" height="20" rx="2" fill="#1d9ae0"/><path d="M11 0h9v9z" fill="#7bd0f5"/><path d="M0 9 8 10 5 20H0z" fill="#56b8ee"/><path d="M0 0h8v6H0z" fill="#eee"/><path d="m10 0-1 8-9 4M9 8l11 3M15 0 4 20" stroke="#10304a" stroke-width="1.400" fill="none"/><text x="8" y="18" font-family="Liberation Sans" font-weight="700" font-size="9" fill="#fff">10</text><path d="M2 2.500h1.500v2M5.500 2v2.500" stroke="#333" fill="none"/></svg></div>
  <div class="dock-item run active d-flex align-items-center justify-content-center"><svg width="18" height="20" viewBox="0 0 18 20"><path d="M1 1h11l5 5v13H1z" fill="#f6f0eb" stroke="#dccfc6"/><path d="M9 0h8v8z" fill="#a3461a"/><path d="M4 8h10v6H4z" fill="#f3c8b0" stroke="#d88760" stroke-width=".7"/><circle cx="8" cy="14" r="2.500" fill="#b9c9b0"/></svg></div>
  <div class="mt-auto pb-2 d-flex justify-content-center mb-1"><svg width="13" height="13" viewBox="0 0 13 13"><path d="M0 1.500h13M0 6.500h13M0 11.500h13" stroke="#fff" stroke-width="2.400" stroke-dasharray="2.400 2.800"/></svg></div>
</aside>

<main class="flex-grow-1 d-flex flex-column">
  <div class="titlebar d-flex align-items-center">
    <span class="caption flex-grow-1 text-center">presentacion1.odp - LibreOffice Impress</span>
    <div class="d-flex gap-1"><span class="wbtn"><svg width="16" height="16"><path d="M4 8.500h8" stroke="#3b3b37"/></svg></span><span class="wbtn"><svg width="16" height="16"><path d="M4.500 5.500h7v5h-7z" fill="none" stroke="#3b3b37"/></svg></span><span class="wbtn closebtn"><svg width="16" height="16"><path d="m5.500 5.500 5 5m0-5-5 5" stroke="#4a2418" stroke-width="1.200"/></svg></span></div>
  </div>
  <nav class="menubar d-flex align-items-center">
    <span>Archivo</span><span>Editar</span><span>Ver</span><span>Insertar</span><span>Formato</span><span>Diapositiva</span><span>Presentación</span><span>Herramientas</span><span>Ventana</span><span>Ayuda</span>
    <span class="docclose ms-auto d-flex align-items-center justify-content-center"><svg width="8" height="8"><path d="m1.500 1.500 5 5m0-5-5 5" stroke="#444" stroke-width="1.300"/></svg></span>
  </nav>
  <div class="toolbars">
    <div class="tbar d-flex align-items-center">
      <span class="grip"></span>
      <span class="tb"><svg width="24" height="24"><use href="#i-new"/></svg></span><span class="ar tight"></span>
      <span class="tb"><svg width="24" height="24"><use href="#i-open"/></svg></span><span class="ar tight"></span>
      <span class="tb"><svg width="24" height="24"><use href="#i-save"/></svg></span><span class="ar"></span><span class="sp"></span>
      <span class="tb"><svg width="24" height="24"><use href="#i-pdf"/></svg></span>
      <span class="tb"><svg width="24" height="24"><use href="#i-print"/></svg></span><span class="sp"></span>
      <span class="tb"><svg width="24" height="24"><use href="#i-cut"/></svg></span>
      <span class="tb"><svg width="24" height="24"><use href="#i-copy"/></svg></span>
      <span class="tb"><svg width="24" height="24"><use href="#i-paste"/></svg></span><span class="ar"></span><span class="sp"></span>
      <span class="tb"><svg width="24" height="24"><use href="#i-brush"/></svg></span><span class="sp"></span>
      <span class="tb"><svg width="24" height="24"><use href="#i-undo"/></svg></span><span class="ar"></span>
      <span class="tb"><svg width="24" height="24"><use href="#i-redo"/></svg></span><span class="ar off"></span><span class="sp"></span>
      <span class="tb"><svg width="24" height="24"><use href="#i-find"/></svg></span>
      <span class="tb"><svg width="24" height="24"><use href="#i-abc"/></svg></span><span class="sp"></span>
      <span class="tb"><svg width="24" height="24"><use href="#i-grid"/></svg></span>
      <span class="tb wide"><svg width="30" height="24"><use href="#i-lay"/></svg></span><span class="ar"></span>
      <span class="tb"><svg width="24" height="24"><use href="#i-master"/></svg></span><span class="sp"></span>
      <span class="tb"><svg width="24" height="24"><use href="#i-show"/></svg></span>
      <span class="tb"><svg width="24" height="24"><use href="#i-show2"/></svg></span><span class="sp"></span>
      <span class="tb"><svg width="24" height="24"><use href="#i-table"/></svg></span><span class="ar"></span>
      <span class="tb"><svg width="24" height="24"><use href="#i-pic"/></svg></span>
      <span class="tb"><svg width="24" height="24"><use href="#i-film"/></svg></span>
      <span class="tb"><svg width="24" height="24"><use href="#i-pie"/></svg></span><span class="sp"></span>
      <span class="tb"><svg width="24" height="24"><use href="#i-text"/></svg></span>
      <span class="tb"><svg width="24" height="24"><use href="#i-frame"/></svg></span>
      <span class="tb"><svg width="24" height="24"><use href="#i-link"/></svg></span>
      <span class="tb on"><svg width="24" height="24"><use href="#i-shapes"/></svg></span>
      <span class="grip ms-2"></span>
      <span class="tb"><svg width="24" height="24"><use href="#i-add"/></svg></span><span class="ar"></span>
      <span class="tb"><svg width="24" height="24"><use href="#i-dup"/></svg></span>
      <span class="tb"><svg width="24" height="24"><use href="#i-del"/></svg></span><span class="sp"></span>
      <span class="tb"><svg width="24" height="24"><use href="#i-design"/></svg></span><span class="ar"></span>
    </div>
    <div class="tbar draw d-flex align-items-center">
      <span class="grip"></span>
      <span class="tb on"><svg width="24" height="24"><use href="#i-cursor"/></svg></span>
      <span class="tb"><svg width="24" height="24"><use href="#i-zoom"/></svg></span><span class="sp"></span>
      <span class="tb"><svg width="24" height="24"><use href="#i-lcol"/></svg></span><span class="ar"></span>
      <span class="tb fill"><svg width="26" height="24"><use href="#i-fcol"/></svg></span><span class="ar"></span><span class="sp"></span>
      <span class="tb"><svg width="24" height="24"><use href="#i-line"/></svg></span>
      <span class="tb"><svg width="24" height="24"><use href="#i-rect"/></svg></span>
      <span class="tb"><svg width="24" height="24"><use href="#i-ell"/></svg></span><span class="sp"></span>
      <span class="tb"><svg width="24" height="24"><use href="#i-arrow"/></svg></span><span class="ar"></span>
      <span class="tb"><svg width="24" height="24"><use href="#i-pencil"/></svg></span><span class="ar"></span>
      <span class="tb"><svg width="24" height="24"><use href="#i-conn"/></svg></span><span class="ar"></span><span class="sp"></span>
      <span class="tb"><svg width="24" height="24"><use href="#i-dia"/></svg></span><span class="ar"></span>
      <span class="tb"><svg width="24" height="24"><use href="#i-smile"/></svg></span><span class="ar"></span>
      <span class="tb"><svg width="24" height="24"><use href="#i-dbl"/></svg></span><span class="ar"></span>
      <span class="tb"><svg width="24" height="24"><use href="#i-flow"/></svg></span><span class="ar"></span>
      <span class="tb"><svg width="24" height="24"><use href="#i-call"/></svg></span><span class="ar"></span>
      <span class="tb"><svg width="24" height="24"><use href="#i-star"/></svg></span><span class="ar"></span>
      <span class="tb"><svg width="24" height="24"><use href="#i-3d"/></svg></span><span class="ar"></span><span class="sp"></span>
      <span class="tb"><svg width="24" height="24"><use href="#i-rot"/></svg></span>
      <span class="tb"><svg width="24" height="24"><use href="#i-align"/></svg></span><span class="ar"></span>
      <span class="tb"><svg width="24" height="24"><use href="#i-arrange"/></svg></span><span class="ar"></span>
      <span class="tb"><svg width="24" height="24"><use href="#i-dist"/></svg></span><span class="sp"></span>
      <span class="tb"><svg width="24" height="24"><use href="#i-shadow"/></svg></span>
      <span class="tb"><svg width="24" height="24"><use href="#i-crop"/></svg></span>
      <span class="tb"><svg width="24" height="24"><use href="#i-wand"/></svg></span><span class="ar"></span><span class="sp"></span>
      <span class="tb"><svg width="24" height="24"><use href="#i-points"/></svg></span>
      <span class="tb"><svg width="24" height="24"><use href="#i-glue"/></svg></span>
      <span class="tb"><svg width="24" height="24"><use href="#i-ext"/></svg></span>
    </div>
  </div>

  <div class="d-flex flex-grow-1">
    <section class="slidepane">
      <div class="panehead d-flex align-items-center justify-content-between"><span>Diapositivas</span><svg width="10" height="10"><path d="m1.500 1.500 7 7m0-7-7 7" stroke="#3a3a3a" stroke-width="2"/></svg></div>
      <div class="thumblist">
        <div class="thumb d-flex"><span class="num">1</span>
          <svg width="141" height="107" viewBox="0 0 139 105" font-family="DejaVu Sans"><path d="M0 59h7v15H0z" fill="#ef2929"/><g font-weight="700" font-size="8.200" fill="#333"><text x="11" y="54" textLength="101">Ambiente de pruebas</text><text x="11" y="63.500" textLength="69">IMS basado en</text><text x="11" y="73" textLength="79">virtualización de</text><text x="11" y="82.500" textLength="82">funciones de red.</text></g><path d="M126 95.500h6" stroke="#d99" stroke-dasharray="1.500 .8"/></svg></div>
        <div class="thumb d-flex"><span class="num">2</span>
          <svg width="141" height="107" viewBox="0 0 139 105" font-family="DejaVu Sans"><path d="M0 4h7v15H0z" fill="#ef2929"/><text x="10" y="15" font-weight="700" font-size="8.500" textLength="55" fill="#333">Introducción</text><g font-size="5.300" font-weight="400" fill="#555"><circle cx="11.500" cy="32.500" r=".7" fill="#e33"/><circle cx="11.500" cy="52.500" r=".7" fill="#e33"/><text x="16" y="34.500" textLength="106">IMS es un estándar de arquitectura de NGN</text><text x="16" y="40.500" textLength="88">que provee servicios multimedia en</text><text x="16" y="46.500" textLength="65">dispositivos fijos y móviles</text><text x="16" y="54.500" textLength="97">La universidad del Cauca carece de una</text><text x="16" y="59.700" textLength="90">arquitectura en la cual la comunidad</text><text x="16" y="65.500" textLength="99">universitaria pueda investigar o desplegar</text><text x="16" y="71.300" textLength="107">pruebas sobre esta tecnología por lo cual el</text><text x="16" y="76.600" textLength="109">objetivo de este trabajo de grado es proveer</text><text x="16" y="82.500" textLength="73">un ambiente de pruebas IMS .</text></g><path d="M126 95.500h6" stroke="#bbb" stroke-dasharray="1.500 .8"/></svg></div>
        <div class="thumb sel d-flex"><span class="num">3</span>
          <svg width="141" height="107" viewBox="0 0 139 105"><path d="M0 4h7v15H0z" fill="#ef2929"/><g transform="translate(-50.800 -37.400) scale(.2)" opacity=".8" font-weight="400"><use href="#diagram"/></g><text x="10" y="15" font-family="DejaVu Sans" font-weight="700" font-size="8.500" textLength="113" fill="#333">Diagrama de casos de uso</text></svg></div>
      </div>
    </section>
    <div class="splitter"><div class="split-knob"><svg width="5" height="8"><path d="M5 0v8L0 4z" fill="#eee"/></svg></div></div>

    <section class="canvasarea">
      <div class="d-flex">
        <div class="slide">
          <svg width="697" height="523" viewBox="253 187 697 523" class="overflow-visible">
            <path d="M253 206h34v75h-34z" fill="#ef2929"/>
            <text x="302.500" y="264" font-family="DejaVu Sans" font-weight="700" font-size="39.800" textLength="572" fill="#333">Diagrama de casos de uso</text>
            <use href="#diagram"/>
            <path d="M283 714h630" stroke="#aaa"/>
            <text x="909" y="675" font-family="DejaVu Sans" font-size="11" fill="#1c4e80" clip-path="url(#numclip)">3</text>
            <g>
              <rect x="562" y="449.500" width="77" height="77" rx="6" fill-opacity=".5"/>
              <path d="M601 450v76M562 487.500h77" stroke="#999"/>
              <path d="M571.500 458.500h22v4h-22zM571.500 465.500h5v3h-5zM579.500 465.500h6v3h-6zM588.500 465.500h5v3h-5zM571.500 471.500h5v3h-5zM579.500 471.500h6v3h-6zM588.500 471.500h5v3h-5zM571.500 477.500h5v3h-5zM579.500 477.500h6v3h-6zM588.500 477.500h5v3h-5z" fill="none" stroke="#bdbdbd" stroke-width="1.800"/>
              <path d="M607 457v24.500h24M610 469h4v11h-4zM616 462h4v18h-4zM622 465h4v15h-4z" fill="#999" fill-opacity=".6" stroke="#bdbdbd" stroke-width="1.500"/>
              <path d="M570 494h24v24h-24z" fill="none" stroke="#bdbdbd" stroke-width="2"/><path d="M570 513h24v5h-24z" fill="#bdbdbd"/>
              <path d="M608 493v26M630 493v26" stroke="#bdbdbd" stroke-width="3.500" stroke-dasharray="2.200 1.600"/><path d="M611 494.500h16v17h-16zM611 515h16" fill="none" stroke="#bdbdbd" stroke-width="1.800"/>
            </g>
            <g fill="#8ae234" stroke="#4e9a06">
              <path d="M279.500 278.500h6v6h-6zM594.500 278.500h6v6h-6zM910.500 278.500h6v6h-6zM279.500 494.500h6v6h-6zM910.500 494.500h6v6h-6zM279.500 710.500h6v6h-6zM594.500 710.500h6v6h-6zM910.500 710.500h6v6h-6z"/>
            </g>
          </svg>
        </div>
        <div class="vbar ms-auto"><div class="vthumb"></div></div>
      </div>
      <div class="hthumb"></div>
    </section>

    <div class="splitter flex-shrink-0"><div class="split-knob"><svg width="5" height="8"><path d="M0 0v8l5-4z" fill="#eee"/></svg></div></div>
    <section class="deck">
      <div class="deckhead d-flex align-items-center justify-content-between"><span>Propiedades</span><svg width="10" height="10"><path d="m1.500 1.500 7 7m0-7-7 7" stroke="#3a3a3a" stroke-width="2"/></svg></div>
      <div class="sect d-flex align-items-center"><span class="pm plus"></span>Carácter<span class="more ms-auto">...</span></div>
      <div class="sect d-flex align-items-center"><span class="pm plus"></span>Párrafo<span class="more ms-auto">...</span></div>
      <div class="sect d-flex align-items-center"><span class="pm plus"></span>Área<span class="more ms-auto">...</span></div>
      <div class="sect d-flex align-items-center"><span class="pm plus"></span>Sombra<span class="more ms-auto">...</span></div>
      <div class="sect d-flex align-items-center"><span class="pm"></span>Imagen</div>
      <div class="two">
        <span class="lbl">Brillo:</span><span class="lbl">Contraste:</span>
        <div class="spin"><span class="val">0 %</span><i></i><i></i></div><div class="spin"><span class="val">0 %</span><i></i><i></i></div>
        <span class="lbl">Modo de color:</span><span class="lbl">Transparencia:</span>
        <div class="combo"><span>Predeterminado</span><span class="caret"></span></div><div class="spin h-100"><span class="val">0 %</span><i></i><i></i></div>
        <div class="chan"><svg class="ch-r" width="17" height="17"><use href="#i-monitor"/></svg><div class="spin flex-grow-1 ms-1"><span class="val">0 %</span><i></i><i></i></div></div>
        <div class="chan"><svg class="ch-g" width="17" height="17"><use href="#i-monitor"/></svg><div class="spin flex-grow-1 ms-1"><span class="val">0 %</span><i></i><i></i></div></div>
        <div class="chan"><svg class="ch-b" width="17" height="17"><use href="#i-monitor"/></svg><div class="spin flex-grow-1 ms-1"><span class="val">0 %</span><i></i><i></i></div></div>
        <div class="chan"><svg width="17" height="17"><path d="M.500 1.500h15v14H.500z" fill="#f2f5fa" stroke="#8b95a3"/><path d="M1 5h14M1 9h14M1 13h14M4.500 2v13M8.500 2v13M12.500 2v13" stroke="#d3dcea"/><path d="M1 15Q11 12 15 2" fill="none" stroke="#f0602a" stroke-width="1.400"/></svg><div class="spin flex-grow-1 ms-1"><span class="val">1,00</span><i></i><i></i></div></div>
      </div>
      <div class="sect lin d-flex align-items-center"><span class="pm"></span>Línea<span class="more ms-auto">...</span></div>
      <div class="d-flex linrow"><div class="combo flat w63"><span class="swatch"></span><span class="caret"></span></div><div class="combo w103"><span>- ninguno</span><span class="caret"></span></div><div class="combo flat w63"><span class="swatch"></span><span class="caret"></span></div></div>
      <div class="prop d-flex align-items-center anch"><span class="lbl">Anchura:</span><svg width="100" height="8"><path d="M0 2.500h76" stroke="#aaa"/><path d="M93 1h5l-2.500 3z" fill="#aaa"/></svg></div>
      <div class="prop d-flex align-items-center colr"><span class="lbl">Color:</span><svg width="100" height="16"><path d="M0 3q4-2 8-1t7-1M0 6q4-2 8-1t7 0M0 9h6m3 0h5" stroke="#ccc" fill="none"/><path d="M0 13.500h16" stroke="#c8c8c8" stroke-width="2"/><path d="M18.500 2.500h64v11h-64z" fill="#c2c2c2" stroke="#aaa"/><path d="M93 6h5l-2.500 3z" fill="#aaa"/></svg></div>
      <div class="prop d-flex align-items-center trns"><span class="lbl">Transparencia:</span><div class="spin off"><span class="val">0 %</span><i></i><i></i></div></div>
      <div class="sect d-flex align-items-center"><span class="pm plus"></span>Posición y tamaño<span class="more ms-auto">...</span></div>
      <div class="deckend"></div>
    </section>
    <aside class="tabs">
      <div class="tabi first"><svg width="14" height="12"><path d="M2 2.500h7M2 5.500h7M2 8.500h6" stroke="#555b6e"/><path d="M7 7h6l-3 4z" fill="#1b2748"/></svg></div>
      <div class="tabi on"><svg width="24" height="24"><use href="#i-wrench"/></svg></div>
      <div class="tabi"><svg width="24" height="24"><use href="#i-trans"/></svg></div>
      <div class="tabi"><svg width="24" height="24"><use href="#i-gold"/></svg></div>
      <div class="tabi"><svg width="24" height="24"><use href="#i-master"/></svg></div>
      <div class="tabi"><svg width="24" height="24"><use href="#i-styles"/></svg></div>
      <div class="tabi"><svg width="24" height="24"><use href="#i-gallery"/></svg></div>
      <div class="tabi"><svg width="24" height="24"><use href="#i-nav"/></svg></div>
    </aside>
  </div>

  <footer class="status d-flex align-items-center">
    <div class="s1">Diapositiva 3 de 3</div><div class="s2">Imagen seleccionado</div><div class="s3">Impress1</div>
    <div class="s4 nb"><svg width="15" height="13"><path d="M4.500 0v10M0 2.500h10" stroke="#2a2ab8" stroke-dasharray="3 1"/><path d="M5.500 4.500h8v6h-8z" fill="none" stroke="#444" stroke-dasharray="1 1"/></svg>1,20 / 3,80</div>
    <div class="s5"><svg width="14" height="13"><path d="M5.500 4.500h8v6h-8z" fill="none" stroke="#222" stroke-dasharray="1 1"/><path d="M1.500 4v7M5 1.500h9" stroke="#222" stroke-width="2" stroke-dasharray="2 1"/></svg>25,28 x 17,34</div>
    <div class="s6 justify-content-center"><svg width="12" height="12"><path d="M1.500 1.500h8v9h-8z" fill="#f6f6f6" stroke="#888"/><path d="M7 6h5M9.500 3.500v5M7.500 4l4 4m0-4-4 4" stroke="#c02020" stroke-width=".8"/></svg></div>
    <div class="s7"></div>
    <div class="s8">Español (Colombia)</div>
    <div class="s9 justify-content-center"><svg class="ms-1" width="13" height="13"><path d="M6.500 2v9M2 6.500h9" stroke="#222" stroke-width="1.600"/><path d="M6.500 0 9 3H4zM6.500 13 9 10H4zM0 6.500 3 4v5zM13 6.500 10 4v5z" fill="#222"/></svg></div>
    <div class="s10"><svg width="126" height="14"><path d="M1 7h8M118 7h8M122 3v8" stroke="#777" stroke-width="1.800"/><path d="M15 7h97M62 2v10" stroke="#b2b0ad" stroke-width="2"/><circle cx="45" cy="7" r="4" fill="#fff" stroke="#777"/></svg></div>
    <div class="s11 nb">66 %</div>
  </footer>
</main>
</div>
<script src="https://cdn.jsdelivr.net/npm/bootstrap@5.3.0/dist/js/bootstrap.bundle.min.js"></script>
</body>
</html>
